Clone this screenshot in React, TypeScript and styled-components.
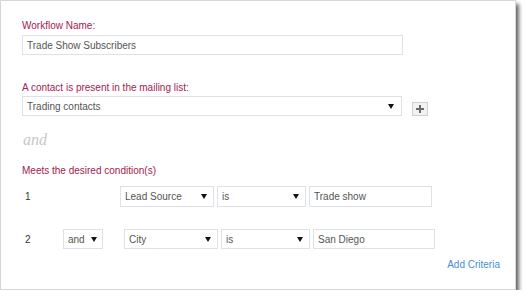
import React from "react";
import styled, { createGlobalStyle } from "styled-components";

const Global = createGlobalStyle`
  html, body { margin: 0; padding: 0; background: #ffffff; }
  body { font-family: "Liberation Sans", Arial, sans-serif; }
`;

const Panel = styled.div`
  box-sizing: border-box;
  width: 516px;
  height: 290px;
  border: 1px solid #d6d6d6;
  background: #fff;
  box-shadow: 3px 4px 4px rgba(0, 0, 0, 0.6);
  padding: 19px 15px 0 21px;
  display: flex;
  flex-direction: column;
`;

const Label = styled.div<{ $mt?: number }>`
  font-size: 10px;
  line-height: 12px;
  height: 12px;
  color: #a3214f;
  margin-top: ${(p) => p.$mt ?? 0}px;
`;

const Field = styled.div<{ $w: number; $h?: number; $mt?: number }>`
  box-sizing: border-box;
  width: ${(p) => p.$w}px;
  height: ${(p) => p.$h ?? 20}px;
  margin-top: ${(p) => p.$mt ?? 0}px;
  border: 1px solid #dde2ea;
  background: #fff;
  display: flex;
  align-items: center;
  padding: 0 0 0 4px;
  font-size: 10px;
  color: #555;
  flex-shrink: 0;
`;

const SelectBox = styled(Field)<{ $ar?: number }>`
  justify-content: space-between;
  padding-right: ${(p) => p.$ar ?? 6}px;
`;

const Arrow = styled.span`
  width: 0;
  height: 0;
  border-left: 3px solid transparent;
  border-right: 3px solid transparent;
  border-top: 5px solid #111;
`;

const ListRow = styled.div`
  display: flex;
  align-items: flex-start;
  margin-top: 2px;
`;

const PlusButton = styled.button`
  box-sizing: border-box;
  width: 16px;
  height: 14px;
  margin: 6px 0 0 10px;
  padding: 0;
  border: 1px solid #d0d0d0;
  background: #f2f2f2;
  display: flex;
  align-items: center;
  justify-content: center;
`;

const AndText = styled.div`
  font-family: "Liberation Serif", "Times New Roman", serif;
  font-style: italic;
  font-size: 16px;
  line-height: 18px;
  color: #c8c8c8;
  margin-top: 15px;
  padding-left: 1px;
`;

const Row = styled.div<{ $mt: number; $h: number }>`
  display: flex;
  align-items: center;
  height: ${(p) => p.$h}px;
  margin-top: ${(p) => p.$mt}px;
  gap: 3px;
`;

const Num = styled.div`
  width: 41px;
  padding-left: 3px;
  box-sizing: border-box;
  font-size: 10px;
  color: #333;
  flex-shrink: 0;
  margin-right: -3px;
`;

const Slot = styled.div<{ $w: number }>`
  width: ${(p) => p.$w}px;
  flex-shrink: 0;
  margin-right: -3px;
  display: flex;
`;

const AddLink = styled.a`
  align-self: flex-end;
  margin-top: 10px;
  font-size: 10px;
  line-height: 12px;
  color: #3f8fd4;
  text-decoration: none;
  cursor: pointer;
`;

const Select = ({ w, h, text, ar }: { w: number; h?: number; text: string; ar?: number }) => (
  <SelectBox $w={w} $h={h} $ar={ar}>
    <span>{text}</span>
    <Arrow />
  </SelectBox>
);

export default function App() {
  return (
    <>
      <Global />
      <Panel>
        <Label>Workflow Name:</Label>
        <Field $w={381} $mt={3}>Trade Show Subscribers</Field>

        <Label $mt={27}>A contact is present in the mailing list:</Label>
        <ListRow>
          <Select w={380} text="Trading contacts" ar={7} />
          <PlusButton aria-label="Add list">
            <svg width="8" height="8" viewBox="0 0 8 8">
              <rect x="3" y="0" width="2" height="8" fill="#6a6a6a" />
              <rect x="0" y="3" width="8" height="2" fill="#6a6a6a" />
            </svg>
          </PlusButton>
        </ListRow>

        <AndText>and</AndText>

        <Label $mt={16}>Meets the desired condition(s)</Label>

        <Row $mt={9} $h={21}>
          <Num>1</Num>
          <Slot $w={57} />
          <Select w={94} h={21} text="Lead Source" />
          <Select w={89} h={21} text="is" />
          <Field $w={123} $h={21}>Trade show</Field>
        </Row>

        <Row $mt={22} $h={20}>
          <Num>2</Num>
          <Slot $w={61}>
            <Select w={40} h={20} text="and" ar={5} />
          </Slot>
          <Select w={94} h={20} text="City" />
          <Select w={89} h={20} text="is" />
          <Field $w={122} $h={20}>San Diego</Field>
        </Row>

        <AddLink>Add Criteria</AddLink>
      </Panel>
    </>
  );
}
